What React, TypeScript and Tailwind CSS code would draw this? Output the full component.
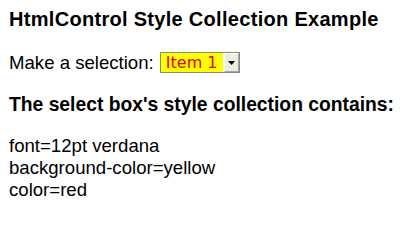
import React from "react";

export default function App() {
  return (
    <div className="w-[408px] h-[210px] bg-white text-black pl-[9px] pt-[7px] overflow-hidden" style={{ fontFamily: '"Liberation Sans", Arial, sans-serif' }}>
      <h3 className="text-[20px] leading-[24px] font-bold tracking-[0.3px] whitespace-nowrap">
        HtmlControl Style Collection Example
      </h3>
      <div className="mt-[21px] flex items-start h-[21px]">
        <span className="text-[18.6px] leading-[21px] whitespace-nowrap">Make a selection:&nbsp;</span>
        <div className="ml-[1px] w-[80px] h-[21px] border border-[#848c74] flex bg-white">
          <div
            className="flex-1 bg-[#ffff00] text-[#e00000] text-[16px] leading-[19px] pl-[5px] whitespace-nowrap"
            style={{ fontFamily: '"DejaVu Sans", Verdana, sans-serif' }}
          >
            Item 1
          </div>
          <div className="w-[15px] ml-[1px] h-[19px] bg-[#ecebe4] border-t border-l border-t-[#ffffff] border-l-[#ffffff] border-b border-r border-b-[#a8a69c] border-r-[#a8a69c] flex items-center justify-center">
            <svg width="7" height="4" viewBox="0 0 7 4">
              <polygon points="0,0 7,0 3.5,4" fill="#000" />
            </svg>
          </div>
        </div>
      </div>
      <h3 className="mt-[20px] text-[19.3px] leading-[23px] font-bold whitespace-nowrap">
        The select box's style collection contains:
      </h3>
      <div className="mt-[19px] text-[18.6px] leading-[22px]">
        <div>font=12pt verdana</div>
        <div>background-color=yellow</div>
        <div>color=red</div>
      </div>
    </div>
  );
}
